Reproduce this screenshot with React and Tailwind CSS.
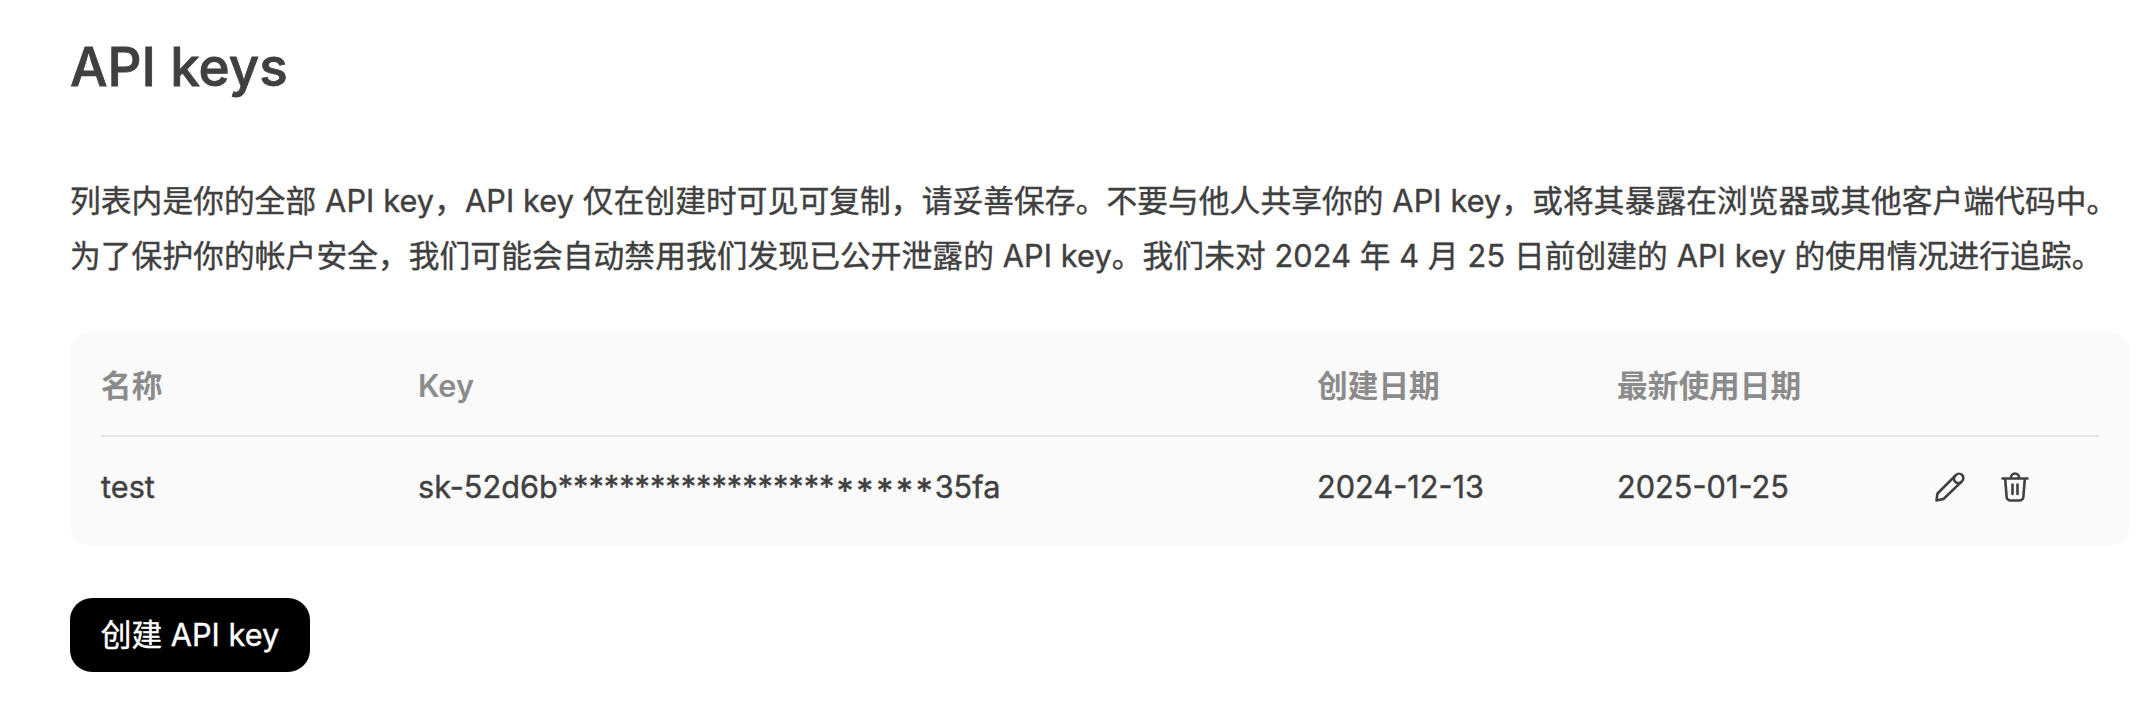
const cell = "text-[30.7px] leading-[48px] whitespace-nowrap";

function Pencil() {
  return (
    <svg width="30" height="30" viewBox="0 0 30 30" fill="none" stroke="#404040" strokeWidth="2.6" strokeLinejoin="round">
      <path d="M1.5 28.5 2.5 21.5 21 3a4.3 4.3 0 0 1 6.1 6.1L8.5 27Z" />
      <path d="M20.3 3.7a4.3 4.3 0 0 0 6.1 6.1" />
    </svg>
  );
}

function Trash() {
  return (
    <svg width="28" height="30" viewBox="0 0 28 30" fill="none" stroke="#404040" strokeWidth="2.6" strokeLinecap="round" strokeLinejoin="round">
      <path d="M1.5 6.5h25M10 6V5.5a4 4 0 0 1 8 0V6M4.2 7l1.4 17.5A4 4 0 0 0 9.6 28.5h8.8a4 4 0 0 0 4-4L23.800 7M11.5 12.500v9.500M16.500 12.500v9.500" />
    </svg>
  );
}

export default function App() {
  return (
    <main className="h-[710px] overflow-hidden bg-white pl-[70px] pt-[32px] font-['Inter','Noto_Sans_CJK_SC',sans-serif] font-normal text-[#404040] [-webkit-text-stroke:0.4px]">
      <h1 className="text-[53px] leading-[70px] font-medium [-webkit-text-stroke:0.8px]">API keys</h1>
      <div className="mt-[71px] text-[30.7px] leading-[55px] whitespace-nowrap">
        <p className="tracking-[0.11px]">列表内是你的全部 API key，API key 仅在创建时可见可复制，请妥善保存。不要与他人共享你的 API key，或将其暴露在浏览器或其他客户端代码中。</p>
        <p className="tracking-[0.11px]">为了保护你的帐户安全，我们可能会自动禁用我们发现已公开泄露的 API key。我们未对 2024 年 4 月 25 日前创建的 API key 的使用情况进行追踪。</p>
      </div>
      <section className="mt-[49px] h-[213px] w-[2060px] rounded-[20px] bg-[#fafafa] px-[31px]">
        <div className="grid h-[105px] grid-cols-[317px_899px_300px_316px_1fr] items-center border-b-2 border-[#e5e5e5] pt-[5px] font-semibold text-[#8b8b8b] [-webkit-text-stroke:0]">
          <span className={cell}>名称</span><span className={cell}>Key</span><span className={cell}>创建日期</span><span className={cell}>最新使用日期</span>
        </div>
        <div className="grid h-[100px] grid-cols-[317px_899px_300px_316px_1fr] items-center">
          <span className={cell}>test</span>
          <span className={cell}>sk-52d6b******************<span className="relative top-[5px] -mr-[1px] ml-[2px] text-[34px] leading-none tracking-[2.8px]">*****</span>35fa</span>
          <span className={cell}>2024-12-13</span><span className={cell}>2025-01-25</span>
          <span className="flex gap-[36px] pl-[2px]"><Pencil /><Trash /></span>
        </div>
      </section>
      <button className="mt-[53px] h-[74px] w-[240px] rounded-[22px] bg-black text-[30.7px] whitespace-nowrap text-white">创建 API key</button>
    </main>
  );
}
